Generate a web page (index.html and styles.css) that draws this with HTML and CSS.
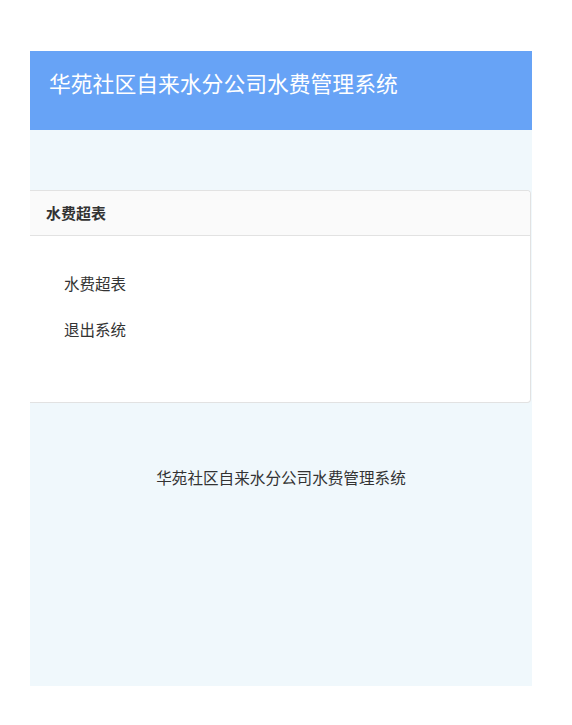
FILE: index.html
```html
<!DOCTYPE html>
<html lang="zh-CN">
<head>
<meta charset="utf-8">
<title>华苑社区自来水分公司水费管理系统</title>
<link rel="stylesheet" href="styles.css">
</head>
<body>
<div class="app">
  <header class="topbar">华苑社区自来水分公司水费管理系统</header>
  <main class="main">
    <section class="card">
      <div class="card-head">水费超表</div>
      <ul class="menu">
        <li class="menu-item">水费超表</li>
        <li class="menu-item">退出系统</li>
      </ul>
    </section>
    <footer class="footer">华苑社区自来水分公司水费管理系统</footer>
  </main>
</div>
</body>
</html>
```
FILE: styles.css
```css
html, body {
  margin: 0;
  padding: 0;
  background: #ffffff;
}
body {
  font-family: "Noto Sans CJK SC", "Noto Sans", sans-serif;
  color: #333333;
}
.app {
  margin: 51px 0 0 30px;
  width: 502px;
  height: 635px;
  background: #f0f8fc;
  display: flex;
  flex-direction: column;
}
.topbar {
  height: 79px;
  box-sizing: border-box;
  background: #67a3f6;
  color: #ffffff;
  font-size: 21.8px;
  line-height: 30px;
  padding: 17px 0 0 19px;
}
.main {
  padding-top: 60px;
  display: flex;
  flex-direction: column;
}
.card {
  background: #ffffff;
  border: 1px solid #e2e2e2;
  border-left: none;
  border-radius: 0 4px 4px 0;
  height: 213px;
  box-sizing: border-box;
  margin-right: 1px;
}
.card-head {
  height: 45px;
  box-sizing: border-box;
  background: #fafafa;
  border-bottom: 1px solid #e2e2e2;
  font-size: 15px;
  font-weight: bold;
  line-height: 44px;
  padding-left: 16px;
  color: #333333;
  border-radius: 0 4px 0 0;
}
.menu {
  list-style: none;
  margin: 0;
  padding: 34px 0 0 34px;
  display: flex;
  flex-direction: column;
  gap: 20px;
}
.menu-item {
  font-size: 15.5px;
  line-height: 26px;
  color: #333333;
}
.footer {
  text-align: center;
  font-size: 15.6px;
  line-height: 26px;
  margin-top: 61px;
  color: #333333;
}
```
